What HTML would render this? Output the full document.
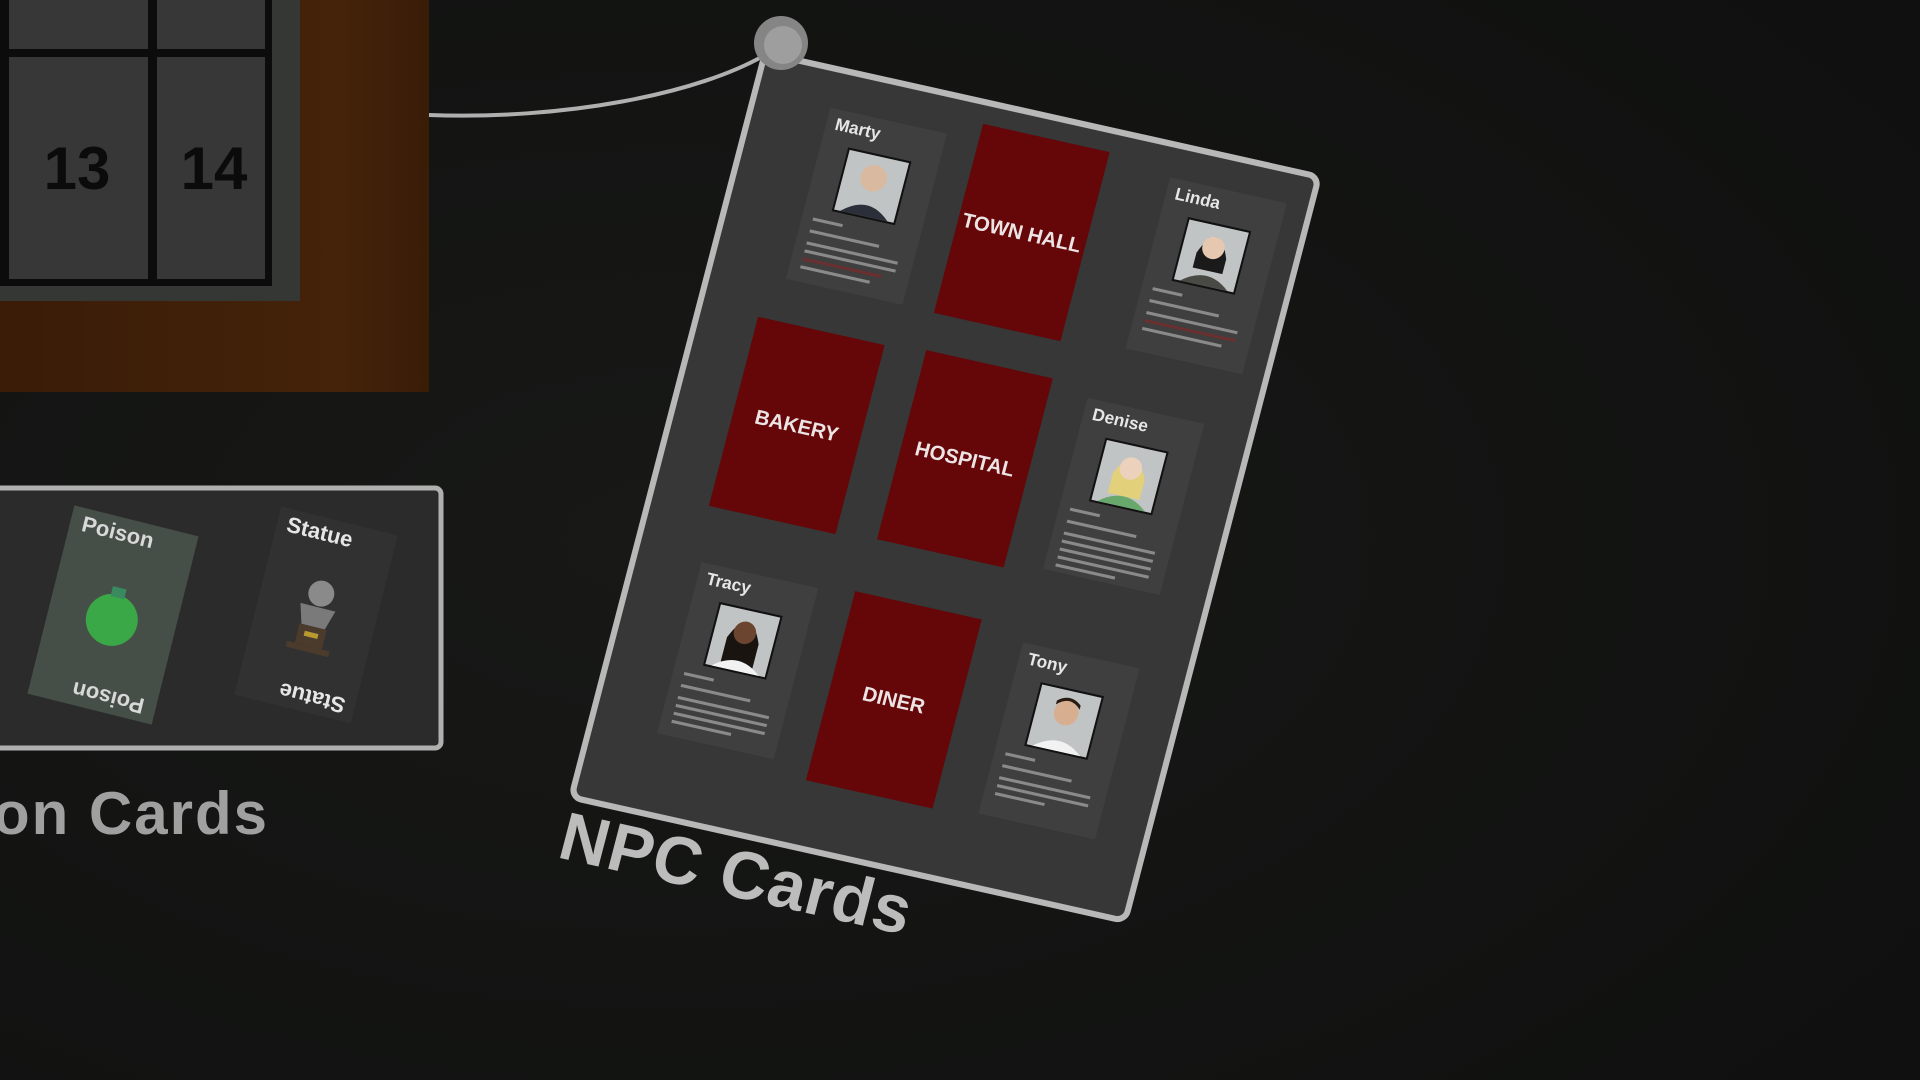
<!DOCTYPE html>
<html><head><meta charset="utf-8"><style>
html,body{margin:0;padding:0;background:#121311;overflow:hidden}
svg{display:block}
text{font-family:"Liberation Sans",sans-serif}
</style></head><body>
<svg width="1920" height="1080" viewBox="0 0 1920 1080" xmlns="http://www.w3.org/2000/svg">
<defs>
<radialGradient id="bg" cx="0.35" cy="0.5" r="0.8">
<stop offset="0" stop-color="#181917"/><stop offset="1" stop-color="#0f100f"/>
</radialGradient>
<linearGradient id="wood" x1="0" y1="0" x2="1" y2="0">
<stop offset="0" stop-color="#3a1c07"/><stop offset="0.8" stop-color="#45230a"/><stop offset="1" stop-color="#3a1c07"/>
</linearGradient>
<g id="portraitBase">
<rect x="-32" y="-32" width="64" height="64" fill="#111" />
<rect x="-30" y="-30" width="60" height="60" fill="#c0c4c5"/>
</g>
</defs>
<rect width="1920" height="1080" fill="url(#bg)"/>

<rect x="0" y="-10" width="429" height="402" fill="url(#wood)"/>
<rect x="0" y="-10" width="300" height="311" fill="#353735"/>
<rect x="0" y="-10" width="272" height="296" fill="#0c0c0c"/>
<rect x="9" y="-10" width="139" height="59" fill="#363736"/>
<rect x="157" y="-10" width="108" height="59" fill="#363736"/>
<rect x="9" y="57" width="139" height="222" fill="#363736"/>
<rect x="157" y="57" width="108" height="222" fill="#363736"/>
<text x="77" y="189" font-size="60" font-weight="bold" fill="#0b0b0b" text-anchor="middle">13</text>
<text x="214" y="189" font-size="60" font-weight="bold" fill="#0b0b0b" text-anchor="middle">14</text>

<path d="M429 115 C560 120 700 95 770 52" stroke="#b0b0b0" stroke-width="4" fill="none"/>

<rect x="-10" y="488" width="451" height="260" rx="6" fill="#2a2b2a" stroke="#b0b0b0" stroke-width="5"/>
<g transform="translate(113,615) rotate(14)">
<rect x="-64" y="-97" width="128" height="194" fill="#464e48"/>
<text x="-52" y="-74" font-size="22" font-weight="bold" fill="#d8d8d8">Poison</text>
<circle cx="0" cy="5" r="26" fill="#3aa846"/>
<rect x="-7" y="-28" width="14" height="10" fill="#3a8a60"/>
<g transform="rotate(180)"><text x="-52" y="-74" font-size="22" font-weight="bold" fill="#d8d8d8">Poison</text></g>
</g>
<g transform="translate(316,615) rotate(14)">
<rect x="-60" y="-97" width="120" height="194" fill="#303130"/>
<text x="-50" y="-74" font-size="22" font-weight="bold" fill="#e6e6e6">Statue</text>
<circle cx="0" cy="-22" r="13" fill="#8a8a8a"/>
<path d="M-18 -8 H18 L12 12 H-12 Z" fill="#7a7a7a"/>
<rect x="-14" y="12" width="28" height="20" fill="#4a3b2c"/>
<rect x="-7" y="18" width="14" height="5" fill="#b89a30"/>
<rect x="-22" y="32" width="44" height="6" fill="#4a3b2c"/>
<g transform="rotate(180)"><text x="-50" y="-74" font-size="22" font-weight="bold" fill="#e6e6e6">Statue</text></g>
</g>
<text x="269" y="834" font-size="60" font-weight="bold" fill="#a0a0a0" text-anchor="end" letter-spacing="2">Action Cards</text>

<g transform="matrix(0.989,0.221,-0.259,0.995,765,53)">
<rect x="0" y="0" width="560" height="748" rx="10" fill="#363736" stroke="#b8b8b8" stroke-width="6"/>
<text x="0" y="808" font-size="66" font-weight="bold" fill="#bcbcbc" letter-spacing="1">NPC Cards</text>

<g fill="#650608">
<rect x="226" y="21" width="128" height="190"/>
<rect x="59" y="252" width="128" height="190"/>
<rect x="228" y="248" width="128" height="190"/>
<rect x="220" y="492" width="128" height="190"/>
</g>
<g font-size="20" font-weight="bold" fill="#ece4e4" text-anchor="middle">
<text x="290" y="123">TOWN HALL</text>
<text x="123" y="354">BAKERY</text>
<text x="292" y="350">HOSPITAL</text>
<text x="284" y="594">DINER</text>
</g>

<g transform="translate(135,124)">
<rect x="-59" y="-86" width="118" height="172" fill="#3e3f3e"/>
<text x="-50" y="-66" font-size="17" font-weight="bold" fill="#e6e6e6">Marty</text>
<use href="#portraitBase" y="-20"/>
<circle cx="0" cy="-28" r="13" fill="#d9b9a0"/><path d="M-24 10 Q0 -12 24 10 Z" fill="#2b2f3a"/>
<g fill="#8a8a8a"><rect x="-48" y="22" width="30" height="3"/><rect x="-48" y="34" width="70" height="3"/><rect x="-48" y="46" width="92" height="3"/><rect x="-48" y="54" width="92" height="3"/><rect x="-48" y="62" width="80" height="3" fill="#6a3030"/><rect x="-48" y="70" width="70" height="3"/></g>
</g>
<g transform="translate(477,118)">
<rect x="-59" y="-86" width="118" height="172" fill="#3e3f3e"/>
<text x="-50" y="-66" font-size="17" font-weight="bold" fill="#e6e6e6">Linda</text>
<use href="#portraitBase" y="-20"/>
<path d="M-15 -20 Q0 -58 15 -20 V-5 H-15Z" fill="#1a1a1a"/><circle cx="0" cy="-28" r="11" fill="#e6c8b0"/><path d="M-24 10 Q0 -10 24 10 Z" fill="#4a4a44"/>
<g fill="#8a8a8a"><rect x="-48" y="22" width="30" height="3"/><rect x="-48" y="34" width="70" height="3"/><rect x="-48" y="46" width="92" height="3"/><rect x="-48" y="54" width="92" height="3" fill="#6a3030"/><rect x="-48" y="62" width="80" height="3"/></g>
</g>
<g transform="translate(453,345)">
<rect x="-59" y="-86" width="118" height="172" fill="#3e3f3e"/>
<text x="-50" y="-66" font-size="17" font-weight="bold" fill="#e6e6e6">Denise</text>
<use href="#portraitBase" y="-20"/>
<path d="M-16 -20 Q0 -56 16 -20 V0 H-16Z" fill="#e3d07a"/><circle cx="0" cy="-28" r="11" fill="#ecd2bc"/><path d="M-24 10 Q0 -10 24 10 Z" fill="#69a86c"/>
<g fill="#8a8a8a"><rect x="-48" y="22" width="30" height="3"/><rect x="-48" y="34" width="70" height="3"/><rect x="-48" y="46" width="92" height="3"/><rect x="-48" y="54" width="92" height="3"/><rect x="-48" y="62" width="92" height="3"/><rect x="-48" y="70" width="92" height="3"/><rect x="-48" y="78" width="60" height="3"/></g>
</g>
<g transform="translate(125,583)">
<rect x="-59" y="-86" width="118" height="172" fill="#3e3f3e"/>
<text x="-50" y="-66" font-size="17" font-weight="bold" fill="#e6e6e6">Tracy</text>
<use href="#portraitBase" y="-20"/>
<path d="M-16 -20 Q0 -58 16 -20 V5 H-16Z" fill="#1a1410"/><circle cx="0" cy="-28" r="11" fill="#6b4530"/><path d="M-24 10 Q0 -10 24 10 Z" fill="#f2f2f2"/>
<g fill="#8a8a8a"><rect x="-48" y="22" width="30" height="3"/><rect x="-48" y="34" width="70" height="3"/><rect x="-48" y="46" width="92" height="3"/><rect x="-48" y="54" width="92" height="3"/><rect x="-48" y="62" width="92" height="3"/><rect x="-48" y="70" width="60" height="3"/></g>
</g>
<g transform="translate(452,591)">
<rect x="-59" y="-86" width="118" height="172" fill="#3e3f3e"/>
<text x="-50" y="-66" font-size="17" font-weight="bold" fill="#e6e6e6">Tony</text>
<use href="#portraitBase" y="-20"/>
<circle cx="0" cy="-28" r="12" fill="#d8ae90"/><path d="M-12 -34 Q0 -46 12 -34 V-38 Q0 -48 -12 -38Z" fill="#2a1a10"/><path d="M-24 10 Q0 -10 24 10 Z" fill="#f2f2f2"/>
<g fill="#8a8a8a"><rect x="-48" y="22" width="30" height="3"/><rect x="-48" y="34" width="70" height="3"/><rect x="-48" y="46" width="92" height="3"/><rect x="-48" y="54" width="92" height="3"/><rect x="-48" y="62" width="50" height="3"/></g>
</g>
</g>

<circle cx="781" cy="43" r="27" fill="#858585"/>
<circle cx="783" cy="45" r="19" fill="#9e9e9e"/>
</svg>
</body></html>
